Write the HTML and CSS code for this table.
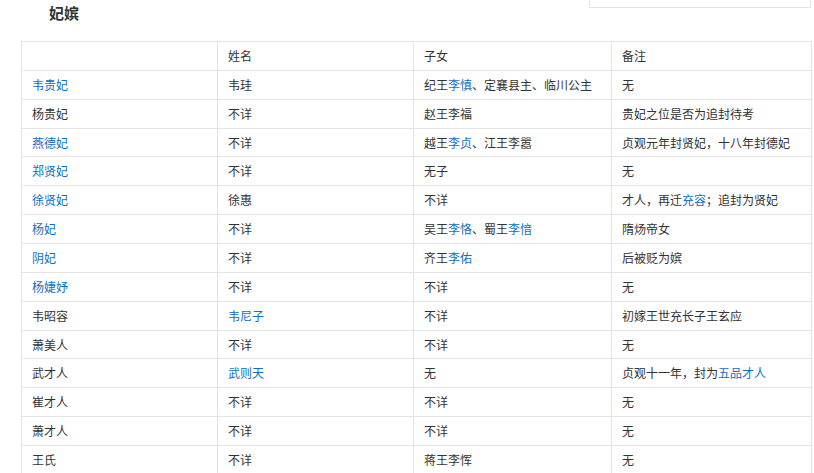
FILE: index.html
```html
<!DOCTYPE html>
<html lang="zh-CN">
<head>
<meta charset="utf-8">
<title>妃嫔</title>
<link rel="stylesheet" href="styles.css">
</head>
<body>
<div class="page">
  <div class="head">
    <h2 class="title">妃嫔</h2>
    <div class="search-box"></div>
  </div>
  <table class="data">
    <colgroup>
      <col class="c1"><col class="c2"><col class="c3"><col class="c4">
    </colgroup>
    <tr><td></td><td>姓名</td><td>子女</td><td>备注</td></tr>
    <tr><td><a href="#">韦贵妃</a></td><td>韦珪</td><td>纪王<a href="#">李慎</a>、定襄县主、临川公主</td><td>无</td></tr>
    <tr><td>杨贵妃</td><td>不详</td><td>赵王李福</td><td>贵妃之位是否为追封待考</td></tr>
    <tr><td><a href="#">燕德妃</a></td><td>不详</td><td>越王<a href="#">李贞</a>、江王李嚣</td><td>贞观元年封贤妃，十八年封德妃</td></tr>
    <tr><td><a href="#">郑贤妃</a></td><td>不详</td><td>无子</td><td>无</td></tr>
    <tr><td><a href="#">徐贤妃</a></td><td>徐惠</td><td>不详</td><td>才人，再迁<a href="#">充容</a>；追封为贤妃</td></tr>
    <tr><td><a href="#">杨妃</a></td><td>不详</td><td>吴王<a href="#">李恪</a>、蜀王<a href="#">李愔</a></td><td>隋炀帝女</td></tr>
    <tr><td><a href="#">阴妃</a></td><td>不详</td><td>齐王<a href="#">李佑</a></td><td>后被贬为嫔</td></tr>
    <tr><td><a href="#">杨婕妤</a></td><td>不详</td><td>不详</td><td>无</td></tr>
    <tr><td>韦昭容</td><td><a href="#">韦尼子</a></td><td>不详</td><td>初嫁王世充长子王玄应</td></tr>
    <tr><td>萧美人</td><td>不详</td><td>不详</td><td>无</td></tr>
    <tr><td>武才人</td><td><a href="#">武则天</a></td><td>无</td><td>贞观十一年，封为<a href="#">五品才人</a></td></tr>
    <tr><td>崔才人</td><td>不详</td><td>不详</td><td>无</td></tr>
    <tr><td>萧才人</td><td>不详</td><td>不详</td><td>无</td></tr>
    <tr><td>王氏</td><td>不详</td><td>蒋王李恽</td><td>无</td></tr>
  </table>
</div>
</body>
</html>
```

FILE: styles.css
```css
html, body {
  margin: 0;
  padding: 0;
  background: #fff;
}
body {
  font-family: "Noto Sans CJK SC", "Microsoft YaHei", sans-serif;
  font-size: 12px;
  color: #333;
}
.page {
  padding: 0 3px 0 21px;
}
.head {
  display: flex;
  justify-content: space-between;
  align-items: flex-start;
  height: 41px;
}
.title {
  margin: 3px 0 0 28px;
  font-size: 15px;
  line-height: 20px;
  font-weight: bold;
  color: #333;
}
.search-box {
  width: 220px;
  height: 26px;
  margin-top: -20px;
  border: 1px solid #e3e3e3;
  background: #fff;
}
.data {
  width: 790px;
  border-collapse: collapse;
  table-layout: fixed;
}
.c1 { width: 196px; }
.c2 { width: 196px; }
.c3 { width: 198px; }
.c4 { width: 200px; }
.data td {
  border: 1px solid #e5e5e5;
  height: 28.86px;
  box-sizing: border-box;
  padding: 0 10px;
  line-height: 18px;
  vertical-align: middle;
  white-space: nowrap;
}
.data a {
  color: #136ec2;
  text-decoration: none;
}
```
